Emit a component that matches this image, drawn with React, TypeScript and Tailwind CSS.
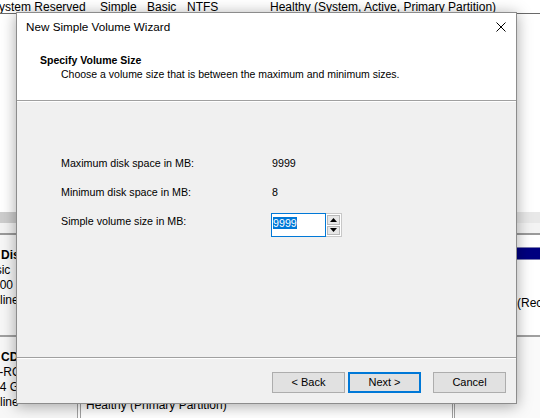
import React from 'react';

function SpinButton({ up }: { up: boolean }) {
  return (
    <div className="flex-1 flex items-center justify-center bg-[#e6e6e6] border border-[#b8b8b8]">
      <svg width="7" height="4" viewBox="0 0 7 4">
        {up ? <path d="M0 4 L3.5 0 L7 4 Z" fill="#000" /> : <path d="M0 0 L3.5 4 L7 0 Z" fill="#000" />}
      </svg>
    </div>
  );
}

function WizardButton({ label, primary }: { label: string; primary?: boolean }) {
  return (
    <div
      className={
        primary
          ? 'w-[73px] h-[21px] flex items-center justify-center bg-[#e1e1e1] border-2 border-[#0078d7] text-[11px] text-black'
          : 'w-[73px] h-[21px] flex items-center justify-center bg-[#e1e1e1] border border-[#adadad] text-[11px] text-black'
      }
    >
      {label}
    </div>
  );
}

function DiskLabel({ lines, second }: { lines: [string, string, string, string]; second: string }) {
  return (
    <div className="w-[77px] shrink-0 bg-[#f7f7f7] pt-[13px] text-[12px] leading-[15px] overflow-hidden whitespace-nowrap">
      <div className="ml-px font-bold">{lines[0]}</div>
      <div className={second}>{lines[1]}</div>
      <div className="-ml-[7px]">{lines[2]}</div>
      <div className="-ml-[16px]">{lines[3]}</div>
    </div>
  );
}

export default function App() {
  return (
    <div className="relative w-[540px] h-[418px] overflow-hidden bg-white text-black font-['Liberation_Sans',Arial,sans-serif]">
      {/* disk management window behind the wizard */}
      <div className="flex flex-col h-full">
        <div className="h-[13px] overflow-hidden flex text-[12px] leading-[15px] whitespace-nowrap">
          <div className="w-[109px] shrink-0 -ml-[9px]">System Reserved</div>
          <div className="w-[47px] shrink-0">Simple</div>
          <div className="w-[40px] shrink-0">Basic</div>
          <div className="w-[83px] shrink-0">NTFS</div>
          <div>Healthy (System, Active, Primary Partition)</div>
        </div>
        <div className="h-px bg-[#6a6a6a]" />
        <div className="h-[198px] bg-white" />
        <div className="h-[11px] flex">
          <div className="w-[300px] bg-[#cdcdcd]" />
          <div className="flex-1 bg-[#e8e8e8]" />
        </div>
        <div className="h-[10px] bg-[#f3f3f3]" />
        <div className="h-[2px] bg-[#9a9a9a]" />

        <div className="flex h-[100px]">
          <DiskLabel lines={['Disk 0', 'Basic', '100 GB', 'Online']} second="-ml-[19px]" />
          <div className="w-[4px] shrink-0 border-x border-[#a0a0a0]" />
          <div className="flex flex-1 bg-white">
            <div className="w-[371px] shrink-0 px-[4px] pt-[12px]">
              <div className="h-[13px] bg-[#000080] border border-[#7b7bb0]" />
              <div className="pl-[1px] pt-[34px] text-[12px] leading-[15px] whitespace-nowrap">Healthy (Boot, Page File, Crash Dump, Primary Partition)</div>
            </div>
            <div className="w-[3px] shrink-0 border-x border-[#a0a0a0]" />
            <div className="flex-1 px-[4px] pt-[12px] overflow-hidden">
              <div className="h-[13px] bg-[#000080] border border-[#7b7bb0]" />
              <div className="pl-[14px] pt-[36px] text-[12px] leading-[15px] whitespace-nowrap">Healthy (Recovery Partition)</div>
            </div>
          </div>
        </div>
        <div className="h-[2px] bg-[#a0a0a0]" />

        <div className="flex flex-1">
          <DiskLabel lines={['CD-ROM 0', 'DVD-ROM', '14 GB', 'Online']} second="-ml-[26px]" />
          <div className="w-[4px] shrink-0 border-x border-[#a0a0a0]" />
          <div className="flex flex-1 bg-white">
            <div className="w-[371px] shrink-0 px-[4px] pt-[12px]">
              <div className="h-[13px] bg-[#000080] border border-[#7b7bb0]" />
              <div className="pl-[1px] pt-[36px] text-[12px] leading-[15px] whitespace-nowrap">Healthy (Primary Partition)</div>
            </div>
            <div className="w-[3px] shrink-0 border-x border-[#a0a0a0]" />
            <div className="flex-1 bg-[#fafafa]" />
          </div>
        </div>
      </div>

      {/* wizard dialog */}
      <div className="absolute left-[16px] top-[12px] w-[501px] h-[392px] flex flex-col border border-[#8c8c8c] bg-[#f0f0f0] shadow-[0_2px_14px_rgba(0,0,0,0.35)]">
        <div className="h-[27px] shrink-0 bg-white flex items-center justify-between pl-[9px] pr-[10px]">
          <span className="text-[11.7px] leading-[14px] mt-px">New Simple Volume Wizard</span>
          <svg width="10" height="10" viewBox="0 0 10 10">
            <path d="M0.5 0.5 L9.5 9.5 M9.5 0.5 L0.5 9.5" stroke="#000" strokeWidth="1" />
          </svg>
        </div>
        <div className="h-[60px] shrink-0 bg-white pt-[14px] pl-[23px] leading-[13px]">
          <div className="font-bold text-[10.5px]">Specify Volume Size</div>
          <div className="ml-[21px] mt-px text-[10.5px]">Choose a volume size that is between the maximum and minimum sizes.</div>
        </div>
        <div className="h-px bg-[#a0a0a0]" />
        <div className="h-px bg-white" />
        <div className="h-[255px] shrink-0 pt-[55px] pl-[44px] text-[10.7px] leading-[13px]">
          <div className="h-[29px] flex">
            <div className="w-[211px]">Maximum disk space in MB:</div>
            <div>9999</div>
          </div>
          <div className="h-[27px] flex">
            <div className="w-[211px]">Minimum disk space in MB:</div>
            <div>8</div>
          </div>
          <div className="flex items-start">
            <div className="w-[210px] mt-[2px]">Simple volume size in MB:</div>
            <div className="w-[55px] h-[24px] bg-white border border-[#0078d7] pl-[1px] pt-[3px]">
              <span className="bg-[#0078d7] text-white leading-[12px] inline-block">9999</span>
            </div>
            <div className="w-[16px] h-[24px] flex flex-col gap-px p-px bg-white border border-[#c8c8c8] border-l-0">
              <SpinButton up />
              <SpinButton up={false} />
            </div>
          </div>
        </div>
        <div className="h-px bg-[#a0a0a0]" />
        <div className="h-px bg-white" />
        <div className="flex-1 flex justify-end items-start pt-[13px] pr-[10px]">
          <WizardButton label="< Back" />
          <div className="w-[3px]" />
          <WizardButton label="Next >" primary />
          <div className="w-[12px]" />
          <WizardButton label="Cancel" />
        </div>
      </div>
    </div>
  );
}
